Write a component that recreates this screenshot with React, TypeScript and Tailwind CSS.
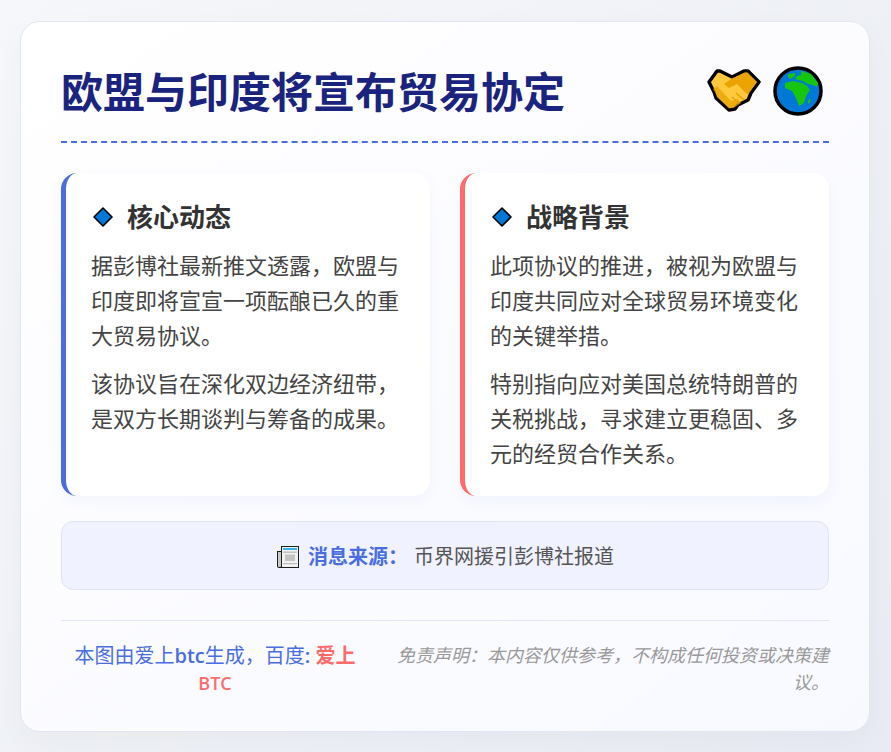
const FONT = "font-['Open_Sans','Noto_Sans_CJK_SC',sans-serif]";

const CARDS = [
  {
    title: "核心动态",
    border: "border-l-[#4a6ee0]",
    paragraphs: [
      "据彭博社最新推文透露，欧盟与印度即将宣宣一项酝酿已久的重大贸易协议。",
      "该协议旨在深化双边经济纽带，是双方长期谈判与筹备的成果。",
    ],
  },
  {
    title: "战略背景",
    border: "border-l-[#ff6b6b]",
    paragraphs: [
      "此项协议的推进，被视为欧盟与印度共同应对全球贸易环境变化的关键举措。",
      "特别指向应对美国总统特朗普的关税挑战，寻求建立更稳固、多元的经贸合作关系。",
    ],
  },
];

function DiamondIcon() {
  return (
    <svg width="22" height="22" viewBox="-1 0 22 22" className="shrink-0">
      <path d="M11 2 L20 11 L11 20 L2 11 Z" fill="#0078d7" stroke="#000" strokeWidth="1.6" strokeLinejoin="round" />
    </svg>
  );
}

function HandshakeIcon() {
  return (
    <svg width="54" height="50" viewBox="0 0 54 50" className="shrink-0">
      <path
        d="M10 5 L13 5 L25 11 L37 5 L41 5 L52 16 L44 27 L41 34 L31 39 L28 43 L22 44 L9 32 L7 26 L2 16 Z"
        fill="#ffc83d"
        stroke="#000"
        strokeWidth="3.4"
        strokeLinejoin="round"
      />
      <path d="M38 6.5 L40.5 6.5 L50 16 L42.5 26 L41 29 L30 18 L22 22 L17 18 L25 12.5 Z" fill="#eaa300" />
      <path d="M6 23 L10 20 L24 35 L31 33 L34 37 L28 41 L22 42.5 L10 31 L8 26 Z" fill="#eaa300" opacity="0.75" />
      <path d="M29 27 L37 34 M25 31 L32 37" stroke="#eaa300" strokeWidth="1.5" />
    </svg>
  );
}

function GlobeIcon() {
  return (
    <svg width="50" height="50" viewBox="0 0 50 50" className="shrink-0">
      <circle cx="25" cy="25" r="23" fill="#0078d7" stroke="#000" strokeWidth="3.5" />
      <path d="M12 17 L20 15 L29 17 L34 20 L37 24 L33 30 L31 37 L26 40 L23 32 L19 25 L12 22 Z" fill="#16c60c" />
      <path d="M28 5 L38 8 L45 17 L44 21 L40 19 L35 18 L30 15 L25 14 L22 13 L24 10 L28 9 Z" fill="#16c60c" />
      <path d="M15 8 L22 7 L22 10 L17 13 L15 11 Z" fill="#16c60c" />
      <path d="M35 35 L37 32 L37 36 L35 38 Z" fill="#16c60c" />
    </svg>
  );
}

function NewspaperIcon() {
  return (
    <svg width="24" height="24" viewBox="0 0 24 24" className="shrink-0">
      <path d="M5 1 H23 V23 H3 Q1 23 1 21 V6 H5 Z" fill="#1f1f1f" />
      <path d="M2 7 H5 V21 Q5 22 4 22 H3 Q2 22 2 21 Z" fill="#c8c8c8" />
      <rect x="6" y="2" width="16" height="20" fill="#f2f2f2" />
      <rect x="7" y="3" width="14" height="2" fill="#35b5e5" />
      <rect x="7" y="6.5" width="14" height="1.4" fill="#bdbdbd" />
      <rect x="9" y="9.5" width="10" height="6.5" fill="#c4c4c4" />
      <rect x="7" y="18" width="14" height="1.2" fill="#bdbdbd" />
    </svg>
  );
}

export default function App() {
  return (
    <div className={`${FONT} min-h-screen pl-5 pt-[21px] bg-[linear-gradient(135deg,#f5f7fa,#e8ebf3)]`}>
      <div className="w-[850px] rounded-[20px] border border-[#e2e6f3] bg-[linear-gradient(145deg,#ffffff,#f8f9ff)] px-10 pt-10 pb-[34px] shadow-[0_10px_30px_rgba(0,0,0,0.03)]">
        {/* Header */}
        <div className="flex items-center justify-between border-b-2 border-dashed border-[#4a6ee0] pb-5 mb-[30px]">
          <h1 className="text-[42px] leading-[59px] font-bold text-[#1a237e]">欧盟与印度将宣布贸易协定</h1>
          <div className="flex items-center gap-3 pr-[6px] pb-[2px]">
            <HandshakeIcon />
            <GlobeIcon />
          </div>
        </div>

        {/* Cards */}
        <div className="grid grid-cols-2 gap-[30px] mb-[25px]">
          {CARDS.map((card) => (
            <div
              key={card.title}
              className={`rounded-2xl border-l-[5px] ${card.border} bg-white px-[25px] pt-[25px] pb-[13px] shadow-[0_5px_15px_rgba(74,110,224,0.06)]`}
            >
              <h2 className="flex items-center gap-[14px] text-[26px] leading-[38px] font-bold text-[#333333] mb-3">
                <DiamondIcon />
                {card.title}
              </h2>
              {card.paragraphs.map((text) => (
                <p key={text} className="text-[22px] leading-[35.2px] text-[#444444] mb-3">
                  {text}
                </p>
              ))}
            </div>
          ))}
        </div>

        {/* Source */}
        <div className="flex items-center justify-center rounded-xl border border-[#dfe3f3] bg-[#f0f2ff] pt-[21px] pb-[19px] text-[20px] leading-[27px] mb-[30px]">
          <NewspaperIcon />
          <span className="font-bold text-[#4a6ee0] ml-[8px] mr-[6px]">消息来源：</span>
          <span className="text-[#555555]">币界网援引彭博社报道</span>
        </div>

        {/* Footer */}
        <div className="flex gap-5 border-t border-[#e2e6f3] pt-[21px]">
          <div className="w-[308px] shrink-0 text-center text-[20px] leading-[27px] text-[#4a6ee0]">
            本图由爱上<span className="font-semibold">btc</span>生成，百度<span className="font-semibold">:</span>{" "}
            <span className="text-[#ff6b6b]">
              <b>爱上</b> <span className="font-semibold text-[18px]">BTC</span>
            </span>
          </div>
          <div className="flex-1 text-right text-[18px] leading-[27px] italic text-[#999999]">
            免责声明：本内容仅供参考，不构成任何投资或决策建议。
          </div>
        </div>
      </div>
    </div>
  );
}
